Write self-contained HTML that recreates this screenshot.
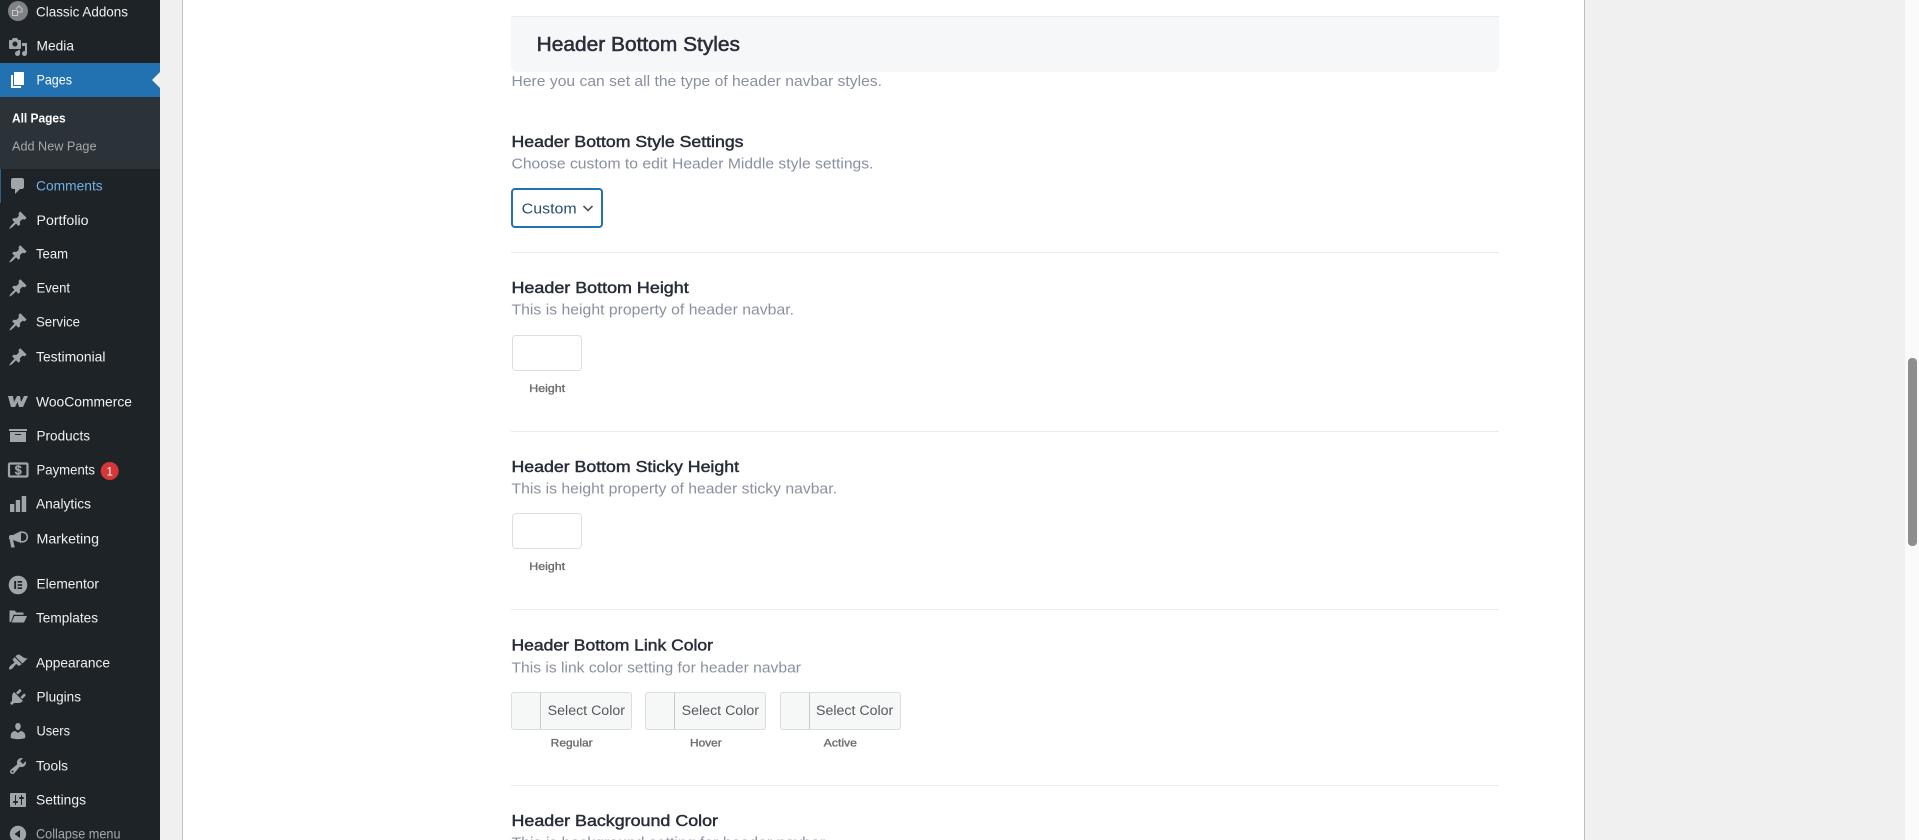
<!DOCTYPE html>
<html lang="en">
<head>
<meta charset="utf-8">
<title>Header Bottom Styles</title>
<style>
html,body{margin:0;padding:0;width:1919px;height:840px;overflow:hidden;background:#f0f0f0}
.box{position:absolute}
#side{left:0;top:0;width:160px;height:840px;background:#1d2327}
#cur{left:0;top:63px;width:160px;height:34px;background:#2271b1}
#sub{left:0;top:97px;width:160px;height:72px;background:#2c3338}
#com{left:0;top:169px;width:1px;height:34px;background:#2c5f8a}
#main{left:182px;top:0;width:1401px;height:840px;background:#fff;border-left:1px solid #c3c4c7;border-right:1px solid #bdbdbd}
#sb{left:1905px;top:0;width:14px;height:840px;background:#fafafa}
#th{left:1908px;top:358px;width:9px;height:188px;background:#8d8d8d;border-radius:4px}
.hr{left:511px;width:988px;height:1px;background:#ebebed}
#hero{left:511px;top:17px;width:988px;height:55px;background:#f6f7f9;border-radius:0 0 7px 7px}
#sel{left:511px;top:188px;width:88px;height:36px;border:2px solid #2271b1;border-radius:4px;background:#fff}
.inp{left:512px;width:68px;height:34px;border:1px solid #dedede;border-radius:4px;background:#fff}
.col{top:692px;height:36px;border:1px solid #dcdcde;border-radius:3px;background:#f6f7f7;box-sizing:content-box}
.col i{position:absolute;left:28px;top:0;width:1px;height:36px;background:#c9cacc}
svg{position:absolute;left:0;top:0}
text{font-family:"Liberation Sans",sans-serif}
.n{font-size:14px;fill:#f0f0f1}
.h1{font-size:20px;fill:#2a2f3b;stroke:#2a2f3b;stroke-width:.55}
.h{font-size:16px;fill:#272c38;stroke:#272c38;stroke-width:.45}
.d{font-size:14.5px;fill:#8b90a0}
.l{font-size:11px;fill:#6c6c6c;stroke:#6c6c6c;stroke-width:.35}
.c{font-size:13.5px;fill:#555a60}
.ic{fill:#a0a5aa}
</style>
</head>
<body>
<div class="box" id="side"></div>
<div class="box" id="cur"></div>
<div class="box" id="sub"></div>
<div class="box" id="com"></div>
<div class="box" id="main"></div>
<div class="box" id="sb"></div>
<div class="box" id="th"></div>
<div class="box hr" style="top:16px"></div>
<div class="box" id="hero"></div>
<div class="box" id="sel"></div>
<div class="box hr" style="top:252px"></div>
<div class="box inp" style="top:335px"></div>
<div class="box hr" style="top:431px"></div>
<div class="box inp" style="top:513px"></div>
<div class="box hr" style="top:609px"></div>
<div class="box col" style="left:511px;width:119px"><i></i></div>
<div class="box col" style="left:645px;width:119px"><i></i></div>
<div class="box col" style="left:780px;width:119px"><i></i></div>
<div class="box hr" style="top:785px"></div>

<svg width="1919" height="840" viewBox="0 0 1919 840" xmlns="http://www.w3.org/2000/svg">
<!-- sidebar labels -->
<g>
<text class="n" x="36" y="16.5" textLength="92" lengthAdjust="spacingAndGlyphs">Classic Addons</text>
<text class="n" x="36.5" y="50.5" textLength="37.5" lengthAdjust="spacingAndGlyphs">Media</text>
<text class="n" x="36.5" y="84.5" textLength="35.5" lengthAdjust="spacingAndGlyphs" style="fill:#fff">Pages</text>
<text x="12" y="122.5" font-size="13" font-weight="700" fill="#fff" textLength="53.7" lengthAdjust="spacingAndGlyphs">All Pages</text>
<text x="12" y="150.5" font-size="13" fill="#a4a8ad" textLength="84.5" lengthAdjust="spacingAndGlyphs">Add New Page</text>
<text class="n" x="36" y="190.5" textLength="66.7" lengthAdjust="spacingAndGlyphs" style="fill:#72aee6">Comments</text>
<text class="n" x="36.5" y="225" textLength="52" lengthAdjust="spacingAndGlyphs">Portfolio</text>
<text class="n" x="36" y="258.7" textLength="32" lengthAdjust="spacingAndGlyphs">Team</text>
<text class="n" x="36.5" y="292.7" textLength="33.5" lengthAdjust="spacingAndGlyphs">Event</text>
<text class="n" x="36" y="326.7" textLength="44" lengthAdjust="spacingAndGlyphs">Service</text>
<text class="n" x="36" y="361.7" textLength="69.5" lengthAdjust="spacingAndGlyphs">Testimonial</text>
<text class="n" x="36" y="406.7" textLength="96" lengthAdjust="spacingAndGlyphs">WooCommerce</text>
<text class="n" x="36.5" y="440.7" textLength="53.5" lengthAdjust="spacingAndGlyphs">Products</text>
<text class="n" x="36.5" y="474.7" textLength="58.5" lengthAdjust="spacingAndGlyphs">Payments</text>
<text class="n" x="36" y="508.7" textLength="55" lengthAdjust="spacingAndGlyphs">Analytics</text>
<text class="n" x="36.5" y="543.3" textLength="62.5" lengthAdjust="spacingAndGlyphs">Marketing</text>
<text class="n" x="36.5" y="588.7" textLength="62.5" lengthAdjust="spacingAndGlyphs">Elementor</text>
<text class="n" x="36" y="622.7" textLength="62" lengthAdjust="spacingAndGlyphs">Templates</text>
<text class="n" x="36" y="667.7" textLength="74" lengthAdjust="spacingAndGlyphs">Appearance</text>
<text class="n" x="36.5" y="701.7" textLength="44.5" lengthAdjust="spacingAndGlyphs">Plugins</text>
<text class="n" x="36.5" y="735.7" textLength="33.5" lengthAdjust="spacingAndGlyphs">Users</text>
<text class="n" x="36" y="770.7" textLength="32" lengthAdjust="spacingAndGlyphs">Tools</text>
<text class="n" x="36" y="804.7" textLength="50" lengthAdjust="spacingAndGlyphs">Settings</text>
<text class="n" x="36" y="838.7" textLength="84.5" lengthAdjust="spacingAndGlyphs" style="fill:#a4a8ad">Collapse menu</text>
</g>

<!-- current-menu arrow -->
<polygon points="160,72 152,80 160,88" fill="#f0f0f1"/>

<!-- sidebar icons -->
<circle cx="18" cy="11" r="10" fill="#808285"/>
<g fill="none" stroke="#c9cacc" stroke-width="1"><rect x="12.5" y="10.5" width="5" height="5"/><path d="M16 9l3-3 3 3v3h-4"/></g>

<g class="ic">
<path transform="translate(8,37)" d="M13 11V4c0-.55-.45-1-1-1h-1.67L9 1H5L3.67 3H2c-.55 0-1 .45-1 1v7c0 .55.45 1 1 1h10c.55 0 1-.45 1-1zM7 4.5c1.38 0 2.5 1.12 2.5 2.5S8.38 9.5 7 9.5 4.5 8.38 4.5 7 5.62 4.5 7 4.5zM14 6h5v10.5c0 1.38-1.12 2.5-2.5 2.5S14 17.88 14 16.5s1.12-2.5 2.5-2.5c.17 0 .34.02.5.05V9h-3V6zm-4 8.05V13h2v3.5c0 1.38-1.12 2.5-2.5 2.5S7 17.88 7 16.5 8.12 14 9.5 14c.17 0 .34.02.5.05z"/>
<path transform="translate(8,176)" d="M5 2h9c1.1 0 2 .9 2 2v7c0 1.1-.9 2-2 2h-2l-5 5v-5H5c-1.1 0-2-.9-2-2V4c0-1.1.9-2 2-2z"/>
<path transform="translate(8,210.3)" d="M10.44 3.02l1.82-1.82 6.36 6.35-1.83 1.82c-1.05-.68-2.48-.57-3.41.36l-.75.75c-.92.93-1.04 2.35-.35 3.41l-1.83 1.82-2.41-2.41-2.8 2.79c-.42.42-3.38 2.71-3.8 2.29s1.86-3.39 2.28-3.81l2.79-2.79L4.1 9.36l1.83-1.82c1.05.69 2.48.57 3.4-.36l.75-.75c.93-.92 1.05-2.35.36-3.41z"/>
<path transform="translate(8,244)" d="M10.44 3.02l1.82-1.82 6.36 6.35-1.83 1.82c-1.05-.68-2.48-.57-3.41.36l-.75.75c-.92.93-1.04 2.35-.35 3.41l-1.83 1.82-2.41-2.41-2.8 2.79c-.42.42-3.38 2.71-3.8 2.29s1.86-3.39 2.28-3.81l2.79-2.79L4.1 9.36l1.83-1.82c1.05.69 2.48.57 3.4-.36l.75-.75c.93-.92 1.05-2.35.36-3.41z"/>
<path transform="translate(8,278)" d="M10.44 3.02l1.82-1.82 6.36 6.35-1.83 1.82c-1.05-.68-2.48-.57-3.41.36l-.75.75c-.92.93-1.04 2.35-.35 3.41l-1.83 1.82-2.41-2.41-2.8 2.79c-.42.42-3.38 2.71-3.8 2.29s1.86-3.39 2.28-3.81l2.79-2.79L4.1 9.36l1.83-1.82c1.05.69 2.48.57 3.4-.36l.75-.75c.93-.92 1.05-2.35.36-3.41z"/>
<path transform="translate(8,312)" d="M10.44 3.02l1.82-1.82 6.36 6.35-1.83 1.82c-1.05-.68-2.48-.57-3.41.36l-.75.75c-.92.93-1.04 2.35-.35 3.41l-1.83 1.82-2.41-2.41-2.8 2.79c-.42.42-3.38 2.71-3.8 2.29s1.86-3.39 2.28-3.81l2.79-2.79L4.1 9.36l1.83-1.82c1.05.69 2.48.57 3.4-.36l.75-.75c.93-.92 1.05-2.35.36-3.41z"/>
<path transform="translate(8,347)" d="M10.44 3.02l1.82-1.82 6.36 6.35-1.83 1.82c-1.05-.68-2.48-.57-3.41.36l-.75.75c-.92.93-1.04 2.35-.35 3.41l-1.83 1.82-2.41-2.41-2.8 2.79c-.42.42-3.38 2.71-3.8 2.29s1.86-3.39 2.28-3.81l2.79-2.79L4.1 9.36l1.83-1.82c1.05.69 2.48.57 3.4-.36l.75-.75c.93-.92 1.05-2.35.36-3.41z"/>
<path d="M8 396h5l1 6 3-6h3l1 6 3-6h4l-5 11h-4l-1.5-5-2.5 5h-4z"/>
<path transform="translate(8,425)" d="M19 4v2H1V4h18zM2 7h16v10H2V7zm11 3V9H7v1h6z"/>
<rect x="10" y="504" width="4.3" height="8"/>
<rect x="15.8" y="500" width="4.3" height="12"/>
<rect x="21.7" y="496" width="4.5" height="16"/>
<path d="M11 535h2l8-4v12l-8-3 1.8 7.5h-3.6L9.8 540A2.6 2.6 0 0 1 9 538v-1a2 2 0 0 1 2-2z"/>
<circle cx="22.5" cy="537" r="4.8" fill="none" stroke="#a0a5aa" stroke-width="1.6"/>
<path transform="translate(8,607.5)" d="M1.5 3h5l2 2h7v2.2H5.5L3 14.5H1.5z M6.4 8.5H19L16 15H3.6z"/>
<path transform="translate(8,652.5)" d="M14.48 11.06L7.41 3.99l1.5-1.5c.5-.56 2.3-.47 3.51.32 1.21.8 1.43 1.28 2.91 2.1 1.18.64 2.45 1.26 4.45.85zm-.71.71L6.7 4.7 4.93 6.47c-.39.39-.39 1.02 0 1.41l1.06 1.06c.39.39.39 1.03 0 1.42-.6.6-1.43 1.11-2.21 1.69-.35.26-.7.53-1.01.84-1.34 1.34-2.2 3.2-1.6 3.9.7.7 2.5-.2 3.9-1.6.31-.31.58-.66.84-1.01.58-.78 1.09-1.61 1.69-2.21.39-.39 1.02-.39 1.41 0l1.06 1.06c.39.39 1.02.39 1.41 0z"/>
<path transform="translate(8,687)" d="M13.11 4.36L9.87 7.6 8 5.73l3.24-3.24c.35-.34 1.05-.2 1.56.32.52.51.66 1.21.31 1.55zm-8 1.77l.91-1.12 9.01 9.01-1.19.84c-.71.71-2.63 1.16-3.82 1.16H6.14L4.9 17.26c-.59.59-1.54.59-2.12 0-.59-.58-.59-1.53 0-2.12l1.24-1.24v-3.88c0-1.13.4-3.19 1.09-3.89zm7.26 3.97l3.24-3.24c.34-.35 1.04-.21 1.55.31.52.51.66 1.21.31 1.55l-3.24 3.25z"/>
<path transform="translate(8,721)" d="M10 9.25c-2.27 0-2.73-3.44-2.73-3.44C7 4.02 7.82 2 9.97 2c2.16 0 2.98 2.02 2.71 3.81 0 0-.41 3.44-2.68 3.44zm0 2.57L12.72 10c2.39 0 4.52 2.33 4.52 4.53v2.49s-3.65 1.13-7.24 1.13c-3.65 0-7.24-1.13-7.24-1.13v-2.49c0-2.25 1.94-4.48 4.47-4.48z"/>
<path transform="translate(8,756)" d="M16.68 9.77c-1.34 1.34-3.3 1.67-4.95.99l-5.41 6.52c-.99.99-2.59.99-3.58 0s-.99-2.59 0-3.57l6.52-5.42c-.68-1.65-.35-3.61.99-4.95 1.28-1.28 3.12-1.62 4.72-1.06l-2.89 2.89 2.82 2.82 2.86-2.87c.53 1.58.18 3.39-1.08 4.65zM3.81 16.21c.4.39 1.04.39 1.43 0 .4-.4.4-1.04 0-1.43-.39-.4-1.03-.4-1.43 0-.39.39-.39 1.03 0 1.43z"/>
<path transform="translate(8,790)" d="M18 16V4c0-.55-.45-1-1-1H3c-.55 0-1 .45-1 1v12c0 .55.45 1 1 1h14c.55 0 1-.45 1-1zM8 11h1c.55 0 1 .45 1 1s-.45 1-1 1H8v1.5c0 .28-.22.5-.5.5s-.5-.22-.5-.5V13H6c-.55 0-1-.45-1-1s.45-1 1-1h1V5.5c0-.28.22-.5.5-.5s.5.22.5.5V11zm5-2h-1c-.55 0-1-.45-1-1s.45-1 1-1h1V5.5c0-.28.22-.5.5-.5s.5.22.5.5V7h1c.55 0 1 .45 1 1s-.45 1-1 1h-1v5.5c0 .28-.22.5-.5.5s-.5-.22-.5-.5V9z"/>
<circle cx="18" cy="585" r="9.3"/>
<circle cx="18" cy="834" r="8.2"/>
</g>
<path transform="translate(8,70)" fill="#fff" d="M6 15V2h10v13H6zm-1 1h8v2H3V5h2v11z"/>
<rect x="9" y="463.5" width="18.5" height="13" rx="1" fill="none" stroke="#a0a5aa" stroke-width="2.2"/>
<text x="18.2" y="474.6" text-anchor="middle" font-size="12.5" font-weight="700" fill="#a0a5aa" stroke="#a0a5aa" stroke-width=".3">$</text>
<polygon points="14.5,834 20,830 20,838" fill="#1d2327"/>
<g fill="#1d2327"><rect x="14.2" y="581" width="1.9" height="8"/><rect x="17.6" y="581" width="4.5" height="1.7"/><rect x="17.6" y="584.2" width="4.5" height="1.7"/><rect x="17.6" y="587.3" width="4.5" height="1.7"/></g>
<circle cx="109.7" cy="471" r="9" fill="#d63638"/>
<text x="109.7" y="475.3" text-anchor="middle" font-size="11.5" fill="#fff">1</text>

<!-- main panel text -->
<text class="h1" x="536.7" y="51" textLength="203.3" lengthAdjust="spacingAndGlyphs">Header Bottom Styles</text>
<text class="d" x="511.5" y="86" textLength="370.5" lengthAdjust="spacingAndGlyphs">Here you can set all the type of header navbar styles.</text>

<text class="h" x="511.5" y="147" textLength="232" lengthAdjust="spacingAndGlyphs">Header Bottom Style Settings</text>
<text class="d" x="511.5" y="168.3" textLength="362" lengthAdjust="spacingAndGlyphs">Choose custom to edit Header Middle style settings.</text>
<text x="521.7" y="213.3" font-size="14.5" fill="#27506f" textLength="55" lengthAdjust="spacingAndGlyphs">Custom</text>
<path d="M583.5 206l4.5 4.5 4.5-4.5" fill="none" stroke="#50575e" stroke-width="1.6"/>

<text class="h" x="511.5" y="293" textLength="177.2" lengthAdjust="spacingAndGlyphs">Header Bottom Height</text>
<text class="d" x="511.5" y="314.3" textLength="282.5" lengthAdjust="spacingAndGlyphs">This is height property of header navbar.</text>
<text class="l" x="529.3" y="392" textLength="35.7" lengthAdjust="spacingAndGlyphs">Height</text>

<text class="h" x="511.5" y="472" textLength="227.5" lengthAdjust="spacingAndGlyphs">Header Bottom Sticky Height</text>
<text class="d" x="511.5" y="493.3" textLength="325.5" lengthAdjust="spacingAndGlyphs">This is height property of header sticky navbar.</text>
<text class="l" x="529.3" y="570" textLength="35.7" lengthAdjust="spacingAndGlyphs">Height</text>

<text class="h" x="511.5" y="650.7" textLength="201.5" lengthAdjust="spacingAndGlyphs">Header Bottom Link Color</text>
<text class="d" x="511.5" y="672.3" textLength="289.5" lengthAdjust="spacingAndGlyphs">This is link color setting for header navbar</text>
<text class="c" x="547.7" y="715" textLength="77.3" lengthAdjust="spacingAndGlyphs">Select Color</text>
<text class="c" x="681.7" y="715" textLength="77.3" lengthAdjust="spacingAndGlyphs">Select Color</text>
<text class="c" x="816" y="715" textLength="77.3" lengthAdjust="spacingAndGlyphs">Select Color</text>
<text class="l" x="550.7" y="746.7" textLength="42" lengthAdjust="spacingAndGlyphs">Regular</text>
<text class="l" x="690" y="746.7" textLength="31.7" lengthAdjust="spacingAndGlyphs">Hover</text>
<text class="l" x="823.7" y="746.7" textLength="33.3" lengthAdjust="spacingAndGlyphs">Active</text>

<text class="h" x="511.5" y="826" textLength="206.5" lengthAdjust="spacingAndGlyphs">Header Background Color</text>
<text class="d" x="511.5" y="847.3" textLength="313.5" lengthAdjust="spacingAndGlyphs">This is background setting for header navbar</text>
</svg>
</body>
</html>
